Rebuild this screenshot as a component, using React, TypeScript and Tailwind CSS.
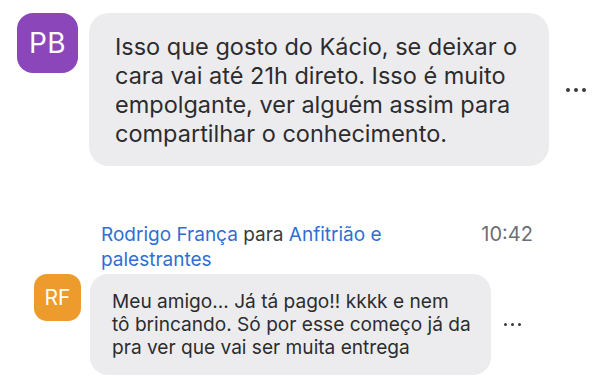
import React from "react";

function Dots({ size, gap }: { size: string; gap: string }) {
  return (
    <div className={`flex ${gap}`}>
      <span className={`${size} rounded-full bg-[#3a3a3c]`} />
      <span className={`${size} rounded-full bg-[#3a3a3c]`} />
      <span className={`${size} rounded-full bg-[#3a3a3c]`} />
    </div>
  );
}

export default function App() {
  return (
    <div
      className="w-[608px] h-[387px] bg-white overflow-hidden text-[#2c2c2e]"
      style={{ fontFamily: "Inter, 'Noto Sans', sans-serif" }}
    >
      <div className="flex items-start pl-[17px] pt-[13px]">
        <div className="w-[61px] h-[60px] rounded-[16px] bg-[#8b47ba] flex items-center justify-center text-white text-[28px] font-normal tracking-[0.5px] shrink-0">
          PB
        </div>
        <div className="ml-[11px] w-[460px] h-[153px] rounded-[20px] bg-[#ececee] pl-[26px] pt-[19px] text-[23.5px] leading-[29px]">
          Isso que gosto do Kácio, se deixar o<br />
          cara vai até 21h direto. Isso é muito<br />
          empolgante, ver alguém assim para<br />
          compartilhar o conhecimento.
        </div>
        <div className="ml-[17px] mt-[75px]">
          <Dots size="w-[4px] h-[4px]" gap="gap-[4px]" />
        </div>
      </div>

      <div className="mt-[56px] pl-[101px] w-[533px] flex justify-between items-start text-[19px] leading-[25px]">
        <div>
          <span className="text-[#2f6fd3]">Rodrigo França</span>{" "}
          <span className="text-[#3a3a3c]">para</span>{" "}
          <span className="text-[#2f6fd3]">Anfitrião e</span>
          <br />
          <span className="text-[#2f6fd3]">palestrantes</span>
        </div>
        <div className="text-[#6e6e73] text-[20px]">10:42</div>
      </div>

      <div className="flex items-start pl-[34px] mt-[2px]">
        <div className="w-[47px] h-[47px] rounded-[13px] bg-[#ec9b2c] flex items-center justify-center text-white text-[21px] font-normal shrink-0">
          RF
        </div>
        <div className="ml-[9px] w-[401px] h-[101px] rounded-[18px] bg-[#ececee] pl-[22px] pt-[16px] text-[19.1px] leading-[23px]">
          Meu amigo... Já tá pago!! kkkk e nem<br />
          tô brincando. Só por esse começo já da<br />
          pra ver que vai ser muita entrega
        </div>
        <div className="ml-[13px] mt-[49px]">
          <Dots size="w-[3px] h-[3px]" gap="gap-[4px]" />
        </div>
      </div>
    </div>
  );
}
